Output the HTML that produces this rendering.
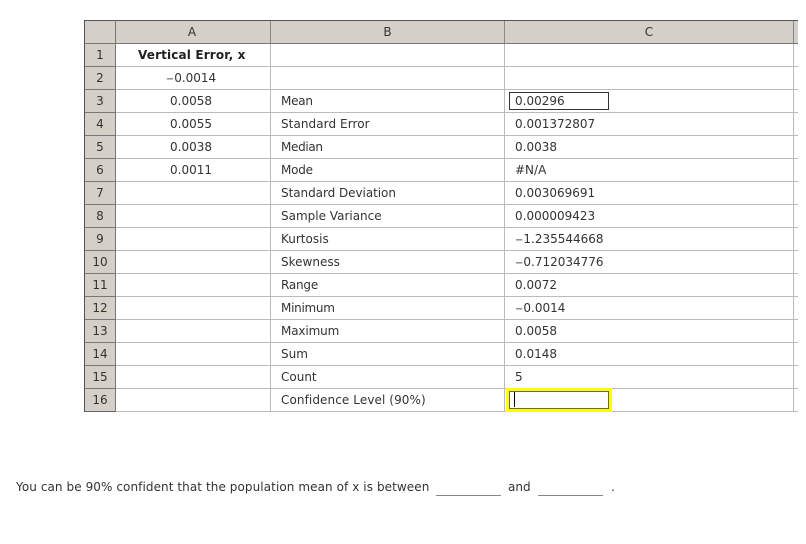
<!DOCTYPE html>
<html>
<head>
<meta charset="utf-8">
<style>
html,body{margin:0;padding:0;background:#fff;}
#p{position:relative;width:806px;height:544px;overflow:hidden;background:#fff;font-family:"DejaVu Sans","Liberation Sans",sans-serif;font-size:12px;color:#333;}
.b{position:absolute;}
.t{position:absolute;height:23px;line-height:23px;white-space:nowrap;margin-top:1px;}
.c{text-align:center;}
.m{font-size:10px;}
</style>
</head>
<body>
<div id="p">
<div class="b" style="left:85px;top:21px;width:713px;height:22px;background:#d4d0c8"></div>
<div class="b" style="left:85px;top:44px;width:30px;height:367px;background:#d4d0c8"></div>

<div class="b" style="left:115px;top:66px;width:683px;height:1px;background:#bbb"></div>
<div class="b" style="left:115px;top:89px;width:683px;height:1px;background:#bbb"></div>
<div class="b" style="left:115px;top:112px;width:683px;height:1px;background:#bbb"></div>
<div class="b" style="left:115px;top:135px;width:683px;height:1px;background:#bbb"></div>
<div class="b" style="left:115px;top:158px;width:683px;height:1px;background:#bbb"></div>
<div class="b" style="left:115px;top:181px;width:683px;height:1px;background:#bbb"></div>
<div class="b" style="left:115px;top:204px;width:683px;height:1px;background:#bbb"></div>
<div class="b" style="left:115px;top:227px;width:683px;height:1px;background:#bbb"></div>
<div class="b" style="left:115px;top:250px;width:683px;height:1px;background:#bbb"></div>
<div class="b" style="left:115px;top:273px;width:683px;height:1px;background:#bbb"></div>
<div class="b" style="left:115px;top:296px;width:683px;height:1px;background:#bbb"></div>
<div class="b" style="left:115px;top:319px;width:683px;height:1px;background:#bbb"></div>
<div class="b" style="left:115px;top:342px;width:683px;height:1px;background:#bbb"></div>
<div class="b" style="left:115px;top:365px;width:683px;height:1px;background:#bbb"></div>
<div class="b" style="left:115px;top:388px;width:683px;height:1px;background:#bbb"></div>
<div class="b" style="left:115px;top:411px;width:683px;height:1px;background:#bbb"></div>

<div class="b" style="left:85px;top:66px;width:30px;height:1px;background:#777"></div>
<div class="b" style="left:85px;top:89px;width:30px;height:1px;background:#777"></div>
<div class="b" style="left:85px;top:112px;width:30px;height:1px;background:#777"></div>
<div class="b" style="left:85px;top:135px;width:30px;height:1px;background:#777"></div>
<div class="b" style="left:85px;top:158px;width:30px;height:1px;background:#777"></div>
<div class="b" style="left:85px;top:181px;width:30px;height:1px;background:#777"></div>
<div class="b" style="left:85px;top:204px;width:30px;height:1px;background:#777"></div>
<div class="b" style="left:85px;top:227px;width:30px;height:1px;background:#777"></div>
<div class="b" style="left:85px;top:250px;width:30px;height:1px;background:#777"></div>
<div class="b" style="left:85px;top:273px;width:30px;height:1px;background:#777"></div>
<div class="b" style="left:85px;top:296px;width:30px;height:1px;background:#777"></div>
<div class="b" style="left:85px;top:319px;width:30px;height:1px;background:#777"></div>
<div class="b" style="left:85px;top:342px;width:30px;height:1px;background:#777"></div>
<div class="b" style="left:85px;top:365px;width:30px;height:1px;background:#777"></div>
<div class="b" style="left:85px;top:388px;width:30px;height:1px;background:#777"></div>
<div class="b" style="left:85px;top:411px;width:30px;height:1px;background:#666"></div>

<div class="b" style="left:270px;top:43px;width:1px;height:369px;background:#bbb"></div>
<div class="b" style="left:504px;top:43px;width:1px;height:369px;background:#bbb"></div>
<div class="b" style="left:793px;top:43px;width:1px;height:369px;background:#bbb"></div>

<div class="b" style="left:84px;top:20px;width:714px;height:1px;background:#555"></div>
<div class="b" style="left:84px;top:43px;width:714px;height:1px;background:#777"></div>
<div class="b" style="left:84px;top:20px;width:1px;height:392px;background:#555"></div>
<div class="b" style="left:115px;top:20px;width:1px;height:392px;background:#777"></div>
<div class="b" style="left:270px;top:21px;width:1px;height:22px;background:#888"></div>
<div class="b" style="left:504px;top:21px;width:1px;height:22px;background:#888"></div>
<div class="b" style="left:793px;top:21px;width:1px;height:22px;background:#888"></div>

<div class="t c" style="left:116px;top:20px;width:152px">A</div>
<div class="t c" style="left:271px;top:20px;width:233px">B</div>
<div class="t c" style="left:505px;top:20px;width:288px">C</div>

<div class="t c" style="left:85px;top:43px;width:30px">1</div>
<div class="t c" style="left:85px;top:66px;width:30px">2</div>
<div class="t c" style="left:85px;top:89px;width:30px">3</div>
<div class="t c" style="left:85px;top:112px;width:30px">4</div>
<div class="t c" style="left:85px;top:135px;width:30px">5</div>
<div class="t c" style="left:85px;top:158px;width:30px">6</div>
<div class="t c" style="left:85px;top:181px;width:30px">7</div>
<div class="t c" style="left:85px;top:204px;width:30px">8</div>
<div class="t c" style="left:85px;top:227px;width:30px">9</div>
<div class="t c" style="left:85px;top:250px;width:30px">10</div>
<div class="t c" style="left:85px;top:273px;width:30px">11</div>
<div class="t c" style="left:85px;top:296px;width:30px">12</div>
<div class="t c" style="left:85px;top:319px;width:30px">13</div>
<div class="t c" style="left:85px;top:342px;width:30px">14</div>
<div class="t c" style="left:85px;top:365px;width:30px">15</div>
<div class="t c" style="left:85px;top:388px;width:30px">16</div>

<div class="t" style="left:138px;top:43px;font-weight:bold;color:#222;letter-spacing:.15px">Vertical Error, x</div>
<div class="t c" style="left:116px;top:66px;width:150px"><span class="m">&minus;</span>0.0014</div>
<div class="t c" style="left:116px;top:89px;width:150px">0.0058</div>
<div class="t c" style="left:116px;top:112px;width:150px">0.0055</div>
<div class="t c" style="left:116px;top:135px;width:150px">0.0038</div>
<div class="t c" style="left:116px;top:158px;width:150px">0.0011</div>

<div class="t" style="left:281px;top:89px;letter-spacing:-.25px">Mean</div>
<div class="t" style="left:281px;top:112px;letter-spacing:.07px">Standard Error</div>
<div class="t" style="left:281px;top:135px;letter-spacing:-.33px">Median</div>
<div class="t" style="left:281px;top:158px;letter-spacing:-.25px">Mode</div>
<div class="t" style="left:281px;top:181px;letter-spacing:-.05px">Standard Deviation</div>
<div class="t" style="left:281px;top:204px">Sample Variance</div>
<div class="t" style="left:281px;top:227px">Kurtosis</div>
<div class="t" style="left:281px;top:250px">Skewness</div>
<div class="t" style="left:281px;top:273px;letter-spacing:-.2px">Range</div>
<div class="t" style="left:281px;top:296px;letter-spacing:-.28px">Minimum</div>
<div class="t" style="left:281px;top:319px;letter-spacing:-.14px">Maximum</div>
<div class="t" style="left:281px;top:342px">Sum</div>
<div class="t" style="left:281px;top:365px">Count</div>
<div class="t" style="left:281px;top:388px;letter-spacing:.09px">Confidence Level (90%)</div>

<div class="b" style="left:509px;top:92px;width:98px;height:16px;border:1px solid #333;background:#fff"></div>
<div class="t" style="left:515px;top:89px">0.00296</div>
<div class="t" style="left:515px;top:112px">0.001372807</div>
<div class="t" style="left:515px;top:135px">0.0038</div>
<div class="t" style="left:515px;top:158px">#N/A</div>
<div class="t" style="left:515px;top:181px">0.003069691</div>
<div class="t" style="left:515px;top:204px">0.000009423</div>
<div class="t" style="left:515px;top:227px"><span class="m">&minus;</span>1.235544668</div>
<div class="t" style="left:515px;top:250px"><span class="m">&minus;</span>0.712034776</div>
<div class="t" style="left:515px;top:273px">0.0072</div>
<div class="t" style="left:515px;top:296px"><span class="m">&minus;</span>0.0014</div>
<div class="t" style="left:515px;top:319px">0.0058</div>
<div class="t" style="left:515px;top:342px">0.0148</div>
<div class="t" style="left:515px;top:365px">5</div>

<div class="b" style="left:506px;top:388px;width:106px;height:24px;background:#ff0"></div>
<div class="b" style="left:509px;top:391px;width:98px;height:16px;border:1px solid #666;background:#fff"></div>
<div class="b" style="left:514px;top:392px;width:1px;height:15px;background:#000"></div>

<div class="t" style="left:16px;top:475px;letter-spacing:.08px">You can be 90% confident that the population mean of x is between</div>
<div class="b" style="left:436px;top:495px;width:65px;height:1px;background:#888"></div>
<div class="t" style="left:508px;top:475px">and</div>
<div class="b" style="left:538px;top:495px;width:65px;height:1px;background:#888"></div>
<div class="t" style="left:611px;top:475px">.</div>
</div>
</body>
</html>
